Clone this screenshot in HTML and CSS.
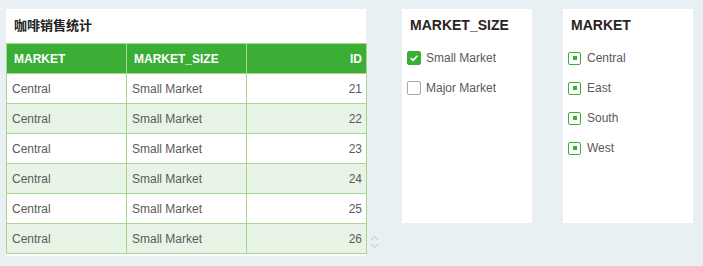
FILE: index.html
```html
<!DOCTYPE html>
<html>
<head>
<meta charset="utf-8">
<link rel="stylesheet" href="styles.css">
</head>
<body>
<div class="page">
  <div class="table-panel">
    <div class="title">咖啡销售统计</div>
    <table class="grid">
      <thead>
        <tr><th>MARKET</th><th>MARKET_SIZE</th><th class="num">ID</th></tr>
      </thead>
      <tbody>
        <tr><td>Central</td><td>Small Market</td><td class="num">21</td></tr>
        <tr class="alt"><td>Central</td><td>Small Market</td><td class="num">22</td></tr>
        <tr><td>Central</td><td>Small Market</td><td class="num">23</td></tr>
        <tr class="alt"><td>Central</td><td>Small Market</td><td class="num">24</td></tr>
        <tr><td>Central</td><td>Small Market</td><td class="num">25</td></tr>
        <tr class="alt"><td>Central</td><td>Small Market</td><td class="num">26</td></tr>
      </tbody>
    </table>
    <svg class="scroll" width="9" height="14" viewBox="0 0 9 14"><path d="M1 5 L4.5 1.5 L8 5 M1 9 L4.5 12.5 L8 9" fill="none" stroke="#b9c2c8" stroke-width="1"/></svg>
  </div>
  <div class="filter-panel first">
    <div class="ftitle">MARKET_SIZE</div>
    <div class="item"><span class="cb checked"><svg width="14" height="14" viewBox="0 0 14 14"><path d="M3.2 7.2 L6 9.8 L10.8 4.4" fill="none" stroke="#fff" stroke-width="2"/></svg></span>Small Market</div>
    <div class="item"><span class="cb"></span>Major Market</div>
  </div>
  <div class="filter-panel second">
    <div class="ftitle">MARKET</div>
    <div class="item"><span class="rb"><span class="dot"></span></span>Central</div>
    <div class="item"><span class="rb"><span class="dot"></span></span>East</div>
    <div class="item"><span class="rb"><span class="dot"></span></span>South</div>
    <div class="item"><span class="rb"><span class="dot"></span></span>West</div>
  </div>
</div>
</body>
</html>
```
FILE: styles.css
```css
html, body {
  margin: 0;
  padding: 0;
  background: #e9f0f3;
  font-family: "Liberation Sans", Arial, "Noto Sans CJK SC", sans-serif;
  font-size: 12px;
}
.page {
  display: flex;
  align-items: flex-start;
  padding: 9px 0 0 6px;
}
.table-panel {
  position: relative;
  width: 360px;
  height: 247px;
  background: #fff;
}
.title {
  height: 34px;
  line-height: 34px;
  padding-left: 8px;
  font-size: 13px;
  font-weight: bold;
  color: #222;
  font-family: "Liberation Sans", "Noto Sans CJK SC", sans-serif;
}
.grid {
  border-collapse: collapse;
  width: 361px;
  table-layout: fixed;
}
.grid th, .grid td {
  border: 1px solid #a8d690;
  height: 29px;
  padding: 0 5px;
  text-align: left;
  white-space: nowrap;
}
.grid th {
  background: #3aae35;
  color: #fff;
  font-weight: bold;
  padding-left: 7px;
}
.grid td {
  color: #5a5a5a;
}
.grid .num {
  text-align: right;
  padding-right: 4px;
}
.grid tr.alt td {
  background: #e8f5e6;
}
.scroll {
  position: absolute;
  left: 364px;
  top: 226px;
}
.filter-panel {
  width: 130px;
  height: 214px;
  background: #fff;
}
.filter-panel.first {
  margin-left: 36px;
}
.filter-panel.second {
  margin-left: 31px;
}
.ftitle {
  height: 34px;
  line-height: 33px;
  padding-left: 8px;
  font-size: 14px;
  font-weight: bold;
  color: #2b2222;
}
.item {
  display: flex;
  align-items: center;
  height: 30px;
  padding-left: 5px;
  color: #5a5a5a;
  font-size: 12px;
}
.cb {
  width: 12px;
  height: 12px;
  border: 1px solid #a9a9a9;
  border-radius: 2px;
  margin-right: 5px;
  display: flex;
  align-items: center;
  justify-content: center;
  flex: none;
}
.cb.checked {
  background: #3aae35;
  border-color: #3aae35;
}
.cb.checked svg {
  display: block;
}
.rb {
  width: 11px;
  height: 11px;
  border: 1px solid #3cb034;
  border-radius: 2px;
  margin-right: 6px;
  display: flex;
  align-items: center;
  justify-content: center;
  flex: none;
}
.rb .dot {
  width: 4px;
  height: 4px;
  background: #3aae35;
}
```
